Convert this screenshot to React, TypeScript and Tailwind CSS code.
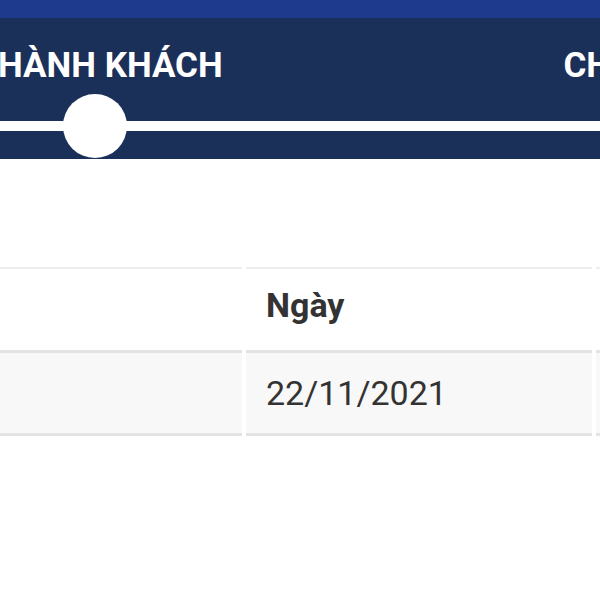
import React from "react";

const columns = [
  { head: "", value: "" },
  { head: "Ngày", value: "22/11/2021" },
  { head: "", value: "" },
];

const App: React.FC = () => {
  return (
    <div className="w-[600px] h-[600px] overflow-hidden bg-white" style={{ fontFamily: "Roboto, 'Noto Sans', sans-serif" }}>
      <div className="h-[18px] bg-[#1e3a8c]" />
      <div className="h-[141px] bg-[#1b3059]">
        <div className="flex justify-between pt-[30px] text-[35px] font-bold leading-none text-white whitespace-nowrap">
          <span className="-ml-[2px]">HÀNH KHÁCH</span>
          <span className="-mr-[11px]">CH</span>
        </div>
        <div className="relative mt-[38px] h-[10px] bg-white">
          <div className="absolute left-[63px] top-[-27px] h-[64px] w-[64px] rounded-full bg-white" />
        </div>
      </div>

      <div className="mt-[108px] grid grid-cols-[242px_346px_1fr] gap-x-[4px] text-[#333333]">
        {columns.map((c, i) => (
          <div key={"h" + i} className="h-[83px] border-t-2 border-[#ededed] flex items-center pl-[20px] pb-[8px] text-[34px] font-bold">
            {c.head}
          </div>
        ))}
        {columns.map((c, i) => (
          <div key={"r" + i} className="h-[86px] border-y-[3px] border-[#e3e3e3] bg-[#f8f8f8] flex items-center pl-[20px] text-[34px]">
            {c.value}
          </div>
        ))}
      </div>
    </div>
  );
};

export default App;
